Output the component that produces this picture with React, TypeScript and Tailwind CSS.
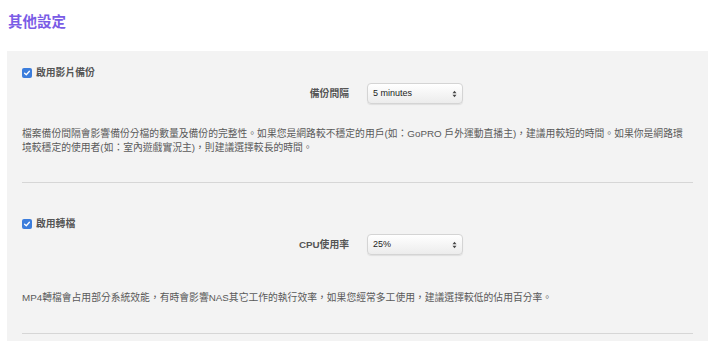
import React from "react";

const FONT = '"Liberation Sans", "Noto Sans CJK TC", sans-serif';

function Check() {
  return (
    <span className="flex h-[10px] w-[10px] shrink-0 items-center justify-center rounded-[2px] bg-[#3b7ddc]">
      <svg width="8" height="8" viewBox="0 0 8 8">
        <path d="M1.6 4.2 L3.3 5.8 L6.4 2.3" fill="none" stroke="#fff" strokeWidth="1.3" strokeLinecap="round" strokeLinejoin="round" />
      </svg>
    </span>
  );
}

function FakeSelect({ value }: { value: string }) {
  return (
    <div className="relative ml-[18px] flex h-[21px] w-[96px] items-center rounded-[4px] border border-[#d4d4d4] bg-gradient-to-b from-white to-[#ececec] pl-[5px] text-[9px] text-[#222] shadow-[0_1px_1px_rgba(0,0,0,0.08)]">
      {value}
      <svg className="absolute right-[5px] top-[6px]" width="5" height="8" viewBox="0 0 5 8">
        <path d="M0.5 3.2 L2.5 0.8 L4.5 3.2 Z" fill="#444" />
        <path d="M0.5 4.8 L2.5 7.2 L4.5 4.8 Z" fill="#444" />
      </svg>
    </div>
  );
}

export default function App() {
  return (
    <div className="min-h-screen bg-white" style={{ fontFamily: FONT }}>
      <h1 className="pl-[8px] pt-[12px] text-[14.5px] font-bold leading-[20px] text-[#7a5ce6]">其他設定</h1>
      <div className="ml-[7px] mr-[12px] mt-[19px] bg-[#f3f3f3] px-[15px] pb-[40px]">
        <div className="pt-[17px]">
          <div className="flex h-[10px] items-center gap-[4px]">
            <Check />
            <span className="text-[9.8px] font-bold leading-[10px] text-[#555]">啟用影片備份</span>
          </div>
          <div className="mt-[5px] flex h-[21px] items-center">
            <span className="w-[327px] text-right text-[9.8px] font-bold leading-[12px] text-[#555]">備份間隔</span>
            <FakeSelect value="5 minutes" />
          </div>
          <p className="mt-[23px] text-[9.8px] leading-[14px] text-[#5a5a5a]">
            檔案備份間隔會影響備份分檔的數量及備份的完整性。如果您是網路較不穩定的用戶(如：GoPRO 戶外運動直播主)，建議用較短的時間。如果你是網路環
            <br />
            境較穩定的使用者(如：室內遊戲實況主)，則建議選擇較長的時間。
          </p>
          <div className="mt-[27px] h-[1px] bg-[#d6d6d6]" />
        </div>
        <div className="pt-[36px]">
          <div className="flex h-[10px] items-center gap-[4px]">
            <Check />
            <span className="text-[9.8px] font-bold leading-[10px] text-[#555]">啟用轉檔</span>
          </div>
          <div className="mt-[5px] flex h-[21px] items-center">
            <span className="w-[327px] text-right text-[9.8px] font-bold leading-[12px] text-[#555]">CPU使用率</span>
            <FakeSelect value="25%" />
          </div>
          <p className="mt-[36px] text-[9.8px] leading-[14px] text-[#5a5a5a]">
            MP4轉檔會占用部分系統效能，有時會影響NAS其它工作的執行效率，如果您經常多工使用，建議選擇較低的佔用百分率。
          </p>
          <div className="mt-[28px] h-[1px] bg-[#d6d6d6]" />
        </div>
      </div>
    </div>
  );
}
